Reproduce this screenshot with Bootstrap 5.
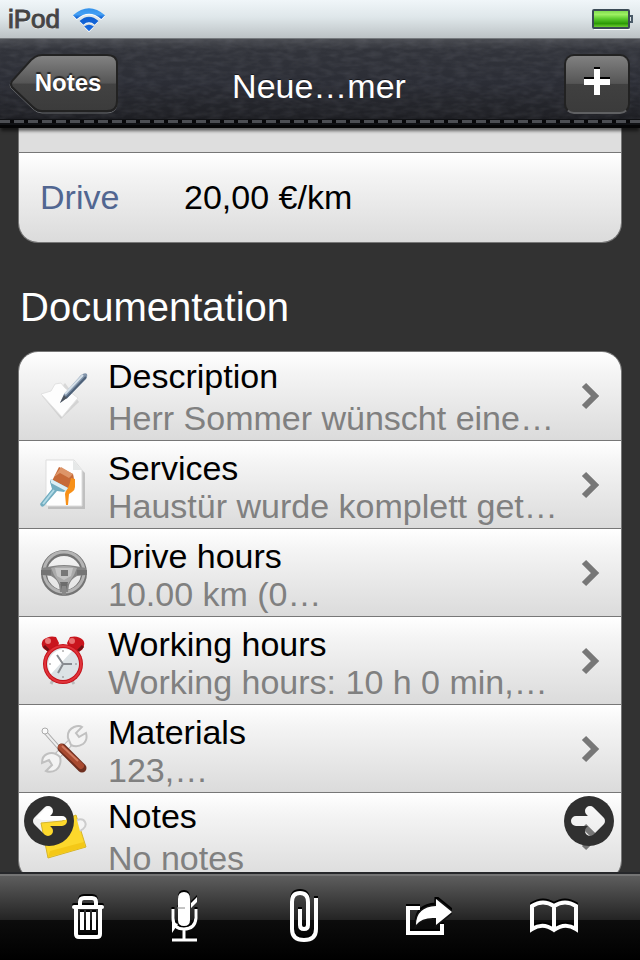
<!DOCTYPE html>
<html lang="en">
<head>
<meta charset="utf-8">
<meta name="viewport" content="width=device-width, initial-scale=1">
<title>Neue…mer</title>
<link href="https://cdn.jsdelivr.net/npm/bootstrap@5.3.0/dist/css/bootstrap.min.css" rel="stylesheet">
<style>
body{background:#323232;font-family:"Liberation Sans",Arial,sans-serif;font-size:34px;line-height:42px;color:#000}
svg{display:block}
.statusbar{height:39px;padding:0 8px;background:linear-gradient(#f0f6f9,#dfe7ea 45%,#bcc2c5);border-bottom:1px solid #75797d;font-size:26px;line-height:38px;color:#444}
.carrier{-webkit-text-stroke:1px #444;text-shadow:0 1px 0 #fff}
.battery{margin-right:-2px}
.topbar{height:89px;padding:0 10px 0 8px;display:grid;grid-template-columns:1fr auto 1fr;background:
 url("data:image/svg+xml,%3Csvg xmlns='http://www.w3.org/2000/svg' width='320' height='88'%3E%3Cfilter id='g' x='0' y='0' width='100%25' height='100%25'%3E%3CfeTurbulence type='fractalNoise' baseFrequency='.08 .22' numOctaves='2' seed='4' stitchTiles='stitch'/%3E%3CfeColorMatrix values='0 0 0 0 .7 0 0 0 0 .72 0 0 0 0 .8 .7 0 0 0 -.26'/%3E%3C/filter%3E%3Crect width='320' height='88' filter='url(%23g)' opacity='.22'/%3E%3C/svg%3E"),
 linear-gradient(#4a4c52,#32343b 12%,#2b2d35 50%,#202126 85%,#111216);position:relative;z-index:2;box-shadow:0 4px 3px -1px rgba(0,0,0,.55)}
.stitches{left:0;right:0;bottom:0;height:9px;border-bottom:3px solid #050506;background:repeating-linear-gradient(90deg,#4c4e53 0 10px,#08080a 10px 14px) 0 1px/100% 3px no-repeat,#101114}
.page-title{color:#fff;font-size:34px;line-height:42px;padding-top:4px;text-shadow:0 -1px 0 #0008}
.back-btn{width:110px;height:60px;position:relative;isolation:isolate;padding:0 0 2px 10px;color:#fff;font-weight:700;font-size:24px;line-height:32px;text-shadow:0 -2px 1px #222}
.back-btn svg{position:absolute;inset:0;z-index:-1}
.add-btn{justify-self:end;width:66px;height:60px;padding:0 0 4px;border:2px solid #222;border-bottom-color:#606163;border-radius:10px;background:linear-gradient(#818181,#555 49%,#404040 50%,#3b3b3b)}
.viewport-area{min-height:0}
.sheet{margin:0 18px;border:1px solid #777;border-radius:20px;overflow:hidden}
.sheet-cut{border-top:0;border-radius:0 0 20px 20px}
.tail{height:24px;background:#dedede}
.line{height:88px;background:linear-gradient(#fff,#f4f4f4 25%,#dbdbdb);color:#000;text-decoration:none}
.line-rate{height:90px;border-top:1px solid #777;padding:0 21px 2px}
.rate-name{width:144px;color:#516691}
.section-title{font-size:40px;line-height:48px;color:#fff;margin:40px 20px 20px}
.entry{padding:0 20px 0 21px}
.entry + .entry{border-top:1px solid #777}
.entry-text{line-height:38px;margin-left:20px;padding-top:4px}
.entry-tall .entry-text{line-height:42px;padding-top:2px}
.entry-last .entry-text{padding-top:0}
.hint{color:#808080}
.round-btn{width:50px;height:50px;bottom:26px}
.round-prev{left:24px}.round-next{right:26px}
.toolbar-dark{height:88px;padding:0 16px 0 40px;display:grid;grid-template-columns:96fr 98fr 140fr 110fr 140fr;border-top:2px solid #26272a;box-shadow:inset 0 2px 0 #747474;background:linear-gradient(#606060,#242424 53%,#0c0c0c 54%,#000);z-index:2}
.toolbar-dark svg{filter:drop-shadow(0 -2px 0 #000)}
</style>
<script src="https://cdn.jsdelivr.net/npm/bootstrap@5.3.0/dist/js/bootstrap.bundle.min.js"></script>
</head>
<body class="d-flex flex-column vh-100 overflow-hidden">

<div class="statusbar d-flex align-items-center flex-shrink-0">
  <span class="carrier">iPod</span>
  <svg class="ms-2 ps-1" width="38" height="28" viewBox="0 0 36 28" aria-label="Wi-Fi">
    <defs><linearGradient id="wf" x1="0" y1="0" x2="0" y2="26" gradientUnits="userSpaceOnUse"><stop stop-color="#2a8be8"/><stop offset=".35" stop-color="#44a0f4"/><stop offset=".5" stop-color="#0f5fd0"/><stop offset="1" stop-color="#1a6ae0"/></linearGradient></defs>
    <g fill="#fff" transform="translate(0 1)"><path d="M1 10Q18-5 35 10L31 14Q18 3 5 14z"/><path d="M8 16Q18 7 28 16L24 20Q18 15 12 20z"/><path d="M13 22Q18 18 23 22L18 27z"/></g>
    <g fill="url(#wf)"><path d="M1 10Q18-5 35 10L31 14Q18 3 5 14z"/><path d="M8 16Q18 7 28 16L24 20Q18 15 12 20z"/><path d="M13 22Q18 18 23 22L18 27z"/></g>
  </svg>
  <svg class="battery ms-auto" width="42" height="22" viewBox="0 0 42 22" aria-label="Battery full">
    <defs><linearGradient id="bt" x1="0" y1="0" x2="0" y2="1"><stop stop-color="#79d84b"/><stop offset=".25" stop-color="#9df062"/><stop offset=".5" stop-color="#59c92b"/><stop offset=".75" stop-color="#2c9a07"/><stop offset="1" stop-color="#7fdc3d"/></linearGradient></defs>
    <path d="M2 21.500h36" stroke="#fff"/>
    <rect x="1" y="2" width="36" height="18" rx="1" fill="url(#bt)" stroke="#3a4a55" stroke-width="2"/>
    <path d="M38 8h2v6h-2" fill="none" stroke="#4a5a68" stroke-width="2"/>
  </svg>
</div>

<header class="topbar align-items-center flex-shrink-0">
  <button type="button" class="btn back-btn border-0">
    <svg width="110" height="60" viewBox="0 0 110 60"><defs><linearGradient id="bk" x1="0" y1="0" x2="0" y2="1"><stop stop-color="#848484"/><stop offset=".5" stop-color="#555"/><stop offset=".52" stop-color="#424242"/><stop offset="1" stop-color="#3b3b3b"/></linearGradient></defs>
    <path d="M28 3Q31 1 34 1H99Q109 1 109 11V49Q109 59 99 59H34Q29 59 25 55L3 34Q1 31 3 28L24 6z" fill="none" stroke="#66686b"/><path d="M27 3Q30 1 34 1H99Q109 1 109 10V47Q109 57 99 57H34Q29 57 25 53L4 33Q2 30 4 27L23 6z" fill="url(#bk)" stroke="#222" stroke-width="2"/></svg>Notes</button>
  <h1 class="page-title mb-0 fw-normal">Neue…mer</h1>
  <button type="button" class="btn add-btn d-flex align-items-center justify-content-center" aria-label="Add">
    <svg width="26" height="30" viewBox="0 0 26 30"><path d="M10 0h6v10h10v6H0v-6h10z" fill="#000"/><path d="M10 2h6v10h10v6H16v10h-6V18H0v-6h10z" fill="#fff"/></svg>
  </button>
  <div class="stitches position-absolute"></div>
</header>

<main class="viewport-area position-relative flex-grow-1 overflow-hidden">
  <div class="sheet sheet-cut">
    <div class="tail"></div>
    <div class="line line-rate d-flex align-items-center"><span class="rate-name">Drive</span><span>20,00 €/km</span></div>
  </div>
  <h2 class="section-title fw-normal">Documentation</h2>

  <div class="sheet">
    <a href="#description" class="line entry entry-tall d-flex align-items-center">
      <svg width="48" height="48" viewBox="0 0 48 48"><path d="M2 24L17 20l8-9 14 19-18 17z" fill="#bbb" opacity=".45"/><path d="M1 22l10-3 4-7 6-1 4 5 13 10-6 7-10 12z" fill="#fdfdfd" stroke="#e2e2e2"/><path d="M20 31l4-9L41 3q4-3 6-1 1 2-1 5L28 25z" fill="#8294aa"/><path d="M25 22L43 3" stroke="#d5e0e9" stroke-width="2"/><path d="M26 26L46 5" stroke="#4e6178" stroke-width="2"/><path d="M20 31l4-8 3 3z" fill="#4c535c"/></svg>
      <div class="entry-text flex-grow-1"><div>Description</div><div class="hint">Herr Sommer wünscht eine…</div></div>
      <svg width="20" height="28" viewBox="0 0 20 28"><path d="M3 3L14 14 3 25" fill="none" stroke="#777" stroke-width="6"/></svg>
    </a>
    <a href="#services" class="line entry d-flex align-items-center">
      <svg width="48" height="52" viewBox="0 0 48 52"><path d="M8 3h26l11 11v36H8z" fill="#aaa" opacity=".65"/><path d="M6 1h28l8 10v36H6z" fill="#fefefe" stroke="#ddd"/><path d="M33 1v10h9z" fill="#e6e8e8"/><path d="M12 22L19 8l14 7q2 7 0 12l-4 6z" fill="#c66a38"/><path d="M14 18L21 8l12 7-4 4-9-5z" fill="#dd9568"/><path d="M26 31q3-2 5-12l4 1v8q0 3-3 5l-3 2-1 11h-2l-1-11z" fill="#f79018"/><path d="M11 20l17 9-4 4-7-1L4 47q-3 2-4-2l12-15-2-7z" fill="#73adc0"/><path d="M11 20l17 9-2 3-15-8z" fill="#dceef4"/><path d="M14 31L3 45" stroke="#b1dae6" stroke-width="2"/></svg>
      <div class="entry-text flex-grow-1"><div>Services</div><div class="hint">Haustür wurde komplett get…</div></div>
      <svg width="20" height="28" viewBox="0 0 20 28"><path d="M3 3L14 14 3 25" fill="none" stroke="#777" stroke-width="6"/></svg>
    </a>
    <a href="#drive" class="line entry d-flex align-items-center">
      <svg width="48" height="48" viewBox="0 0 48 48"><circle cx="24" cy="24" r="20" fill="none" stroke="#747474" stroke-width="6"/><circle cx="24" cy="23" r="20" fill="none" stroke="#b4b4b4" stroke-width="3"/><path d="M2 19l11-2q11-2 22 0l11 2v7l-9 1q-6 3-8 9l-1 7h-8l-1-7q-2-6-8-9l-9-1z" fill="#858585"/><path d="M11 19q13-4 26 0l-3 7-6 9h-8l-6-9z" fill="#aaa"/><path d="M15 19h18l-2 8-7 4-7-4z" fill="#c5c5c5"/><rect x="21" y="21" width="7" height="6" fill="#777"/><path d="M1 21h10v5H1zM37 21h10v5H37z" fill="#747474"/><path d="M20 33h8l-2 8h-4z" fill="#6c6c6c"/><path d="M22 37h4v10h-4z" fill="#888"/></svg>
      <div class="entry-text flex-grow-1"><div>Drive hours</div><div class="hint">10.00 km (0…</div></div>
      <svg width="20" height="28" viewBox="0 0 20 28"><path d="M3 3L14 14 3 25" fill="none" stroke="#777" stroke-width="6"/></svg>
    </a>
    <a href="#work" class="line entry d-flex align-items-center">
      <svg width="48" height="50" viewBox="0 0 48 50"><path d="M13 44l-2 4M32 45l2 3" stroke="#bbb" stroke-width="3"/><path d="M14 9h18v5H14z" fill="#a40b12"/><path d="M4 13Q0 9 3 4q6-5 13-3l3 6-1 3q-7 1-9 6z" fill="#c9151d"/><path d="M42 14q4-6 1-10-5-5-13-3l-3 6 1 3q6 1 9 6z" fill="#c9151d"/><circle cx="8" cy="5" r="3" fill="#e87878"/><circle cx="32" cy="5" r="3" fill="#e87070"/><path d="M4 10l5 5M43 10l-5 5" stroke="#731014" stroke-width="3"/><circle cx="23" cy="28" r="20" fill="#c4121a"/><circle cx="23" cy="28" r="18" fill="none" stroke="#e0343b" stroke-width="2"/><circle cx="23" cy="28" r="16" fill="#dce2e5"/><path d="M11 38A16 16 0 0 1 32 15z" fill="#fff"/><path d="M23 28h9M23 28L17 19M23 28l-5 9" stroke="#878b90" stroke-width="2"/><path d="M23 14v2M23 40v2M9 28h2M35 28h2" stroke="#888"/></svg>
      <div class="entry-text flex-grow-1"><div>Working hours</div><div class="hint">Working hours: 10 h 0 min,…</div></div>
      <svg width="20" height="28" viewBox="0 0 20 28"><path d="M3 3L14 14 3 25" fill="none" stroke="#777" stroke-width="6"/></svg>
    </a>
    <a href="#materials" class="line entry d-flex align-items-center">
      <svg width="48" height="48" viewBox="0 0 48 48"><path d="M10 38L38 10" stroke="#bbb" stroke-width="7"/><path d="M11 37L37 11" stroke="#f4f4f4" stroke-width="5"/><path d="M28 13q-1-8 6-11 5-2 8 0l-6 6 3 4 7-4q2 7-3 11-6 4-12 1z" fill="#f3f3f3" stroke="#c0c0c0" stroke-width="2"/><path d="M20 32q2 8-4 13-5 3-10 1l6-6-3-5-7 3q0-7 5-9 7-3 13 3z" fill="#f3f3f3" stroke="#c0c0c0" stroke-width="2"/><path d="M5 7L20 24" stroke="#a8a8a8" stroke-width="4"/><path d="M5 7L20 24" stroke="#eee" stroke-width="2"/><circle cx="5" cy="6" r="3" fill="#fafafa" stroke="#aaa"/><path d="M22 23L42 43" stroke="#6e2f20" stroke-width="9" stroke-linecap="round"/><path d="M21 22L41 41" stroke="#a94a30" stroke-width="6" stroke-linecap="round"/><path d="M22 21L38 36" stroke="#d07a60" stroke-width="2"/></svg>
      <div class="entry-text flex-grow-1"><div>Materials</div><div class="hint">123,…</div></div>
      <svg width="20" height="28" viewBox="0 0 20 28"><path d="M3 3L14 14 3 25" fill="none" stroke="#777" stroke-width="6"/></svg>
    </a>
    <a href="#notes" class="line entry entry-tall entry-last d-flex align-items-center">
      <svg width="48" height="48" viewBox="0 0 48 48"><path d="M1 10L22 8 36 2 46 34 8 45z" fill="#fcd82c" stroke="#d6b52c"/><path d="M8 44l37-10-1-5-34 9z" fill="#f4c817"/><path d="M37 7q6-2 8 2 2 4-2 7l-3 2" fill="#f4f4f4" stroke="#ccc" stroke-width="2"/></svg>
      <div class="entry-text flex-grow-1"><div>Notes</div><div class="hint">No notes</div></div>
      <svg width="20" height="28" viewBox="0 0 20 28"><path d="M3 3L14 14 3 25" fill="none" stroke="#777" stroke-width="6"/></svg>
    </a>
  </div>

  <button type="button" class="btn round-btn round-prev position-absolute p-0 border-0" aria-label="Previous">
    <svg width="50" height="50" viewBox="0 0 50 50"><mask id="cut-prev"><path fill="#fff" d="M0 0h50v50H0z"/><path d="M38 25H15M24 15L14 25 24 35" fill="none" stroke="#000" stroke-width="10" stroke-linecap="round" stroke-linejoin="round"/></mask><path d="M18 24H42V20H28V14L22 12 12 22z" fill="#fff"/><circle cx="25" cy="25" r="25" fill="#303030" mask="url(#cut-prev)"/></svg>
  </button>
  <button type="button" class="btn round-btn round-next position-absolute p-0 border-0" aria-label="Next">
    <svg width="50" height="50" viewBox="0 0 50 50"><mask id="cut-next"><path fill="#fff" d="M0 0h50v50H0z"/><path d="M12 25H35M26 15L36 25 26 35" fill="none" stroke="#000" stroke-width="10" stroke-linecap="round" stroke-linejoin="round"/></mask><circle cx="25" cy="25" r="25" fill="#303030" mask="url(#cut-next)"/></svg>
  </button>
</main>

<nav class="toolbar-dark flex-shrink-0" aria-label="Actions">
  <button type="button" class="btn p-0 border-0 d-flex align-items-center justify-content-center" aria-label="Delete">
    <svg width="32" height="44" viewBox="0 0 32 44"><g fill="none" stroke="#fff" stroke-width="4"><path d="M8 11V7q0-4 4-4h8q4 0 4 4v4M4 12v27q0 3 3 3h18q3 0 3-3V12"/><path d="M2 12h28" stroke-linecap="round"/><path d="M10 17v18M16 17v18M22 17v18" stroke-width="4"/></g></svg>
  </button>
  <button type="button" class="btn p-0 border-0 d-flex align-items-center justify-content-center" aria-label="Record">
    <svg width="28" height="52" viewBox="0 0 28 52"><path d="M7 8q0-7 6-7t6 7v21q0 6-6 6t-6-6z" fill="#fff"/><path d="M2 18v9q0 11 11 11t12-11V18M13 38v10M1 49h25" fill="none" stroke="#fff" stroke-width="3"/><path d="M26 6v5l-6 6v-5zM1 31l6 2-6 9z" fill="#fff"/><path d="M6 17h8" stroke="#888"/></svg>
  </button>
  <button type="button" class="btn p-0 border-0 d-flex align-items-center justify-content-center" aria-label="Attach">
    <svg width="30" height="52" viewBox="0 0 30 52"><path d="M27 7v31q0 11-12 11T3 38V11q0-9 8-9t8 9v23q0 4-4 4t-4-4V18" fill="none" stroke="#fff" stroke-width="4"/></svg>
  </button>
  <button type="button" class="btn p-0 border-0 d-flex align-items-center justify-content-center" aria-label="Share">
    <svg width="46" height="36" viewBox="0 0 46 36"><path d="M14 9H2v25h34V25" fill="none" stroke="#fff" stroke-width="4"/><path d="M30 0l16 13-16 13v-7q-14-1-20 7Q10 8 30 7z" fill="#fff" stroke="#111" stroke-width="3" paint-order="stroke"/></svg>
  </button>
  <button type="button" class="btn p-0 border-0 d-flex align-items-center justify-content-center" aria-label="Library">
    <svg width="48" height="34" viewBox="0 0 48 34"><path d="M24 6v24M2 29V6q11-7 22 0 11-7 22 0v23q-11-7-22 1-11-8-22-1z" fill="none" stroke="#fff" stroke-width="4"/></svg>
  </button>
</nav>
</body>
</html>
